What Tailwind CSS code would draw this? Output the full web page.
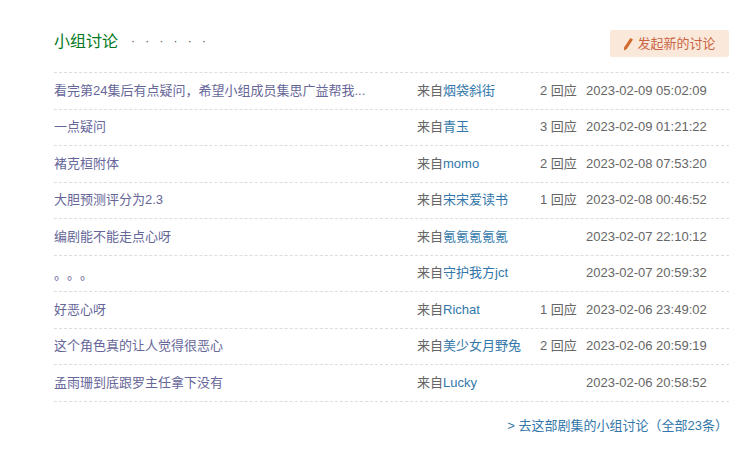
<!DOCTYPE html>
<html lang="zh-CN">
<head>
  <meta charset="UTF-8">
  <title>小组讨论</title>
  <script src="https://cdn.jsdelivr.net/npm/@tailwindcss/browser@4"></script>
</head>
<body class="bg-white font-['Liberation_Sans','Noto_Sans_CJK_SC',sans-serif] text-[13px] text-[#666]">
  <div class="w-[675px] ml-[54px] pt-[29px]">
    <!-- 标题 -->
    <div class="flex justify-between h-[44px] border-b border-dashed border-[#ddd]">
      <div class="flex pt-[1px]">
        <h2 class="text-[16px] leading-[24px] text-[#007722]">小组讨论</h2>
        <span class="ml-[13px] -mt-[1px] text-[12px] leading-[24px] tracking-[10.2px] text-[#555]">······</span>
      </div>
      <a class="flex items-center justify-center w-[119px] h-[27px] mt-[1px] rounded-[2px] bg-[#fae9da] text-[#ca6445]">
        <svg class="w-[12px] h-[14px] mr-[3px] -ml-[1px]" viewBox="0 0 12 14"><path d="M8.4 1 11 2.6 4.8 12 2 13.4 2 10.4Z" fill="#d2692d"/></svg>
        发起新的讨论
      </a>
    </div>

    <!-- 讨论列表 -->
    <div class="flex h-[37px] pb-[1px] items-center border-b border-dashed border-[#ddd]">
      <a class="w-[363px] text-[#666699]">看完第24集后有点疑问，希望小组成员集思广益帮我...</a>
      <div class="w-[123px]">来自<a class="text-[#3377aa]">烟袋斜街</a></div>
      <div class="w-[46px]">2 回应</div>
      <div class="whitespace-nowrap">2023-02-09 05:02:09</div>
    </div>
    <div class="flex h-[36px] pb-[1px] items-center border-b border-dashed border-[#ddd]">
      <a class="w-[363px] text-[#666699]">一点疑问</a>
      <div class="w-[123px]">来自<a class="text-[#3377aa]">青玉</a></div>
      <div class="w-[46px]">3 回应</div>
      <div class="whitespace-nowrap">2023-02-09 01:21:22</div>
    </div>
    <div class="flex h-[37px] pb-[1px] items-center border-b border-dashed border-[#ddd]">
      <a class="w-[363px] text-[#666699]">褚克桓附体</a>
      <div class="w-[123px]">来自<a class="text-[#3377aa]">momo</a></div>
      <div class="w-[46px]">2 回应</div>
      <div class="whitespace-nowrap">2023-02-08 07:53:20</div>
    </div>
    <div class="flex h-[36px] pb-[1px] items-center border-b border-dashed border-[#ddd]">
      <a class="w-[363px] text-[#666699]">大胆预测评分为2.3</a>
      <div class="w-[123px]">来自<a class="text-[#3377aa]">宋宋爱读书</a></div>
      <div class="w-[46px]">1 回应</div>
      <div class="whitespace-nowrap">2023-02-08 00:46:52</div>
    </div>
    <div class="flex h-[37px] pb-[1px] items-center border-b border-dashed border-[#ddd]">
      <a class="w-[363px] text-[#666699]">编剧能不能走点心呀</a>
      <div class="w-[123px]">来自<a class="text-[#3377aa]">氪氪氪氪氪</a></div>
      <div class="w-[46px]"></div>
      <div class="whitespace-nowrap">2023-02-07 22:10:12</div>
    </div>
    <div class="flex h-[36px] pb-[1px] items-center border-b border-dashed border-[#ddd]">
      <a class="w-[363px] text-[#666699] pt-[4px] [text-spacing-trim:space-all]">。。。</a>
      <div class="w-[123px]">来自<a class="text-[#3377aa]">守护我方jct</a></div>
      <div class="w-[46px]"></div>
      <div class="whitespace-nowrap">2023-02-07 20:59:32</div>
    </div>
    <div class="flex h-[37px] pb-[1px] items-center border-b border-dashed border-[#ddd]">
      <a class="w-[363px] text-[#666699]">好恶心呀</a>
      <div class="w-[123px]">来自<a class="text-[#3377aa]">Richat</a></div>
      <div class="w-[46px]">1 回应</div>
      <div class="whitespace-nowrap">2023-02-06 23:49:02</div>
    </div>
    <div class="flex h-[36px] pb-[1px] items-center border-b border-dashed border-[#ddd]">
      <a class="w-[363px] text-[#666699]">这个角色真的让人觉得很恶心</a>
      <div class="w-[123px]">来自<a class="text-[#3377aa]">美少女月野兔</a></div>
      <div class="w-[46px]">2 回应</div>
      <div class="whitespace-nowrap">2023-02-06 20:59:19</div>
    </div>
    <div class="flex h-[37px] pb-[1px] items-center border-b border-dashed border-[#ddd]">
      <a class="w-[363px] text-[#666699]">孟雨珊到底跟罗主任拿下没有</a>
      <div class="w-[123px]">来自<a class="text-[#3377aa]">Lucky</a></div>
      <div class="w-[46px]"></div>
      <div class="whitespace-nowrap">2023-02-06 20:58:52</div>
    </div>

    <div class="mt-[14px] pr-[1px] text-right text-[#3377aa]">&gt; 去这部剧集的小组讨论（全部23条）</div>
  </div>
</body>
</html>
